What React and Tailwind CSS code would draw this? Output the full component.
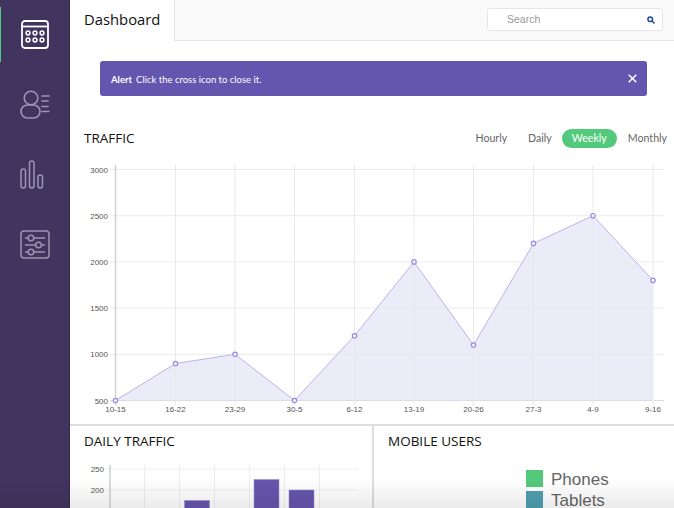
import React from "react";

const xs = [115.5, 175.5, 235, 294.5, 354.5, 414, 473.5, 533.5, 593, 653];
const xl = ["10-15", "16-22", "23-29", "30-5", "6-12", "13-19", "20-26", "27-3", "4-9", "9-16"];
const vals = [500, 900, 1000, 500, 1200, 2000, 1100, 2200, 2500, 1800];
const yOf = (v) => 400.5 - ((v - 500) / 2500) * 231;

function TrafficChart() {
  const pts = vals.map((v, i) => `${xs[i]},${yOf(v)}`).join(" ");
  return (
    <svg width="604" height="264" viewBox="70 160 604 264" className="block">
      <polygon points={`115.5,400.5 ${pts} 653,400.5`} fill="#ecebf8" />
      {[3000, 2500, 2000, 1500, 1000, 500].map((v) => (
        <g key={v}>
          <line x1="110" x2="664" y1={yOf(v)} y2={yOf(v)} stroke={v === 500 ? "#dcdce4" : "#ebebeb"} />
          <text x="108" y={yOf(v) + 3} textAnchor="end" fontSize="8" fill="#555" fontFamily="Liberation Sans">{v}</text>
        </g>
      ))}
      {xs.map((x, i) => (
        <g key={x}>
          <line x1={x} x2={x} y1="165" y2="405" stroke={i === 0 ? "#d0d0d0" : "#e9e9ec"} strokeWidth={i === 0 ? 1.5 : 1} />
          <text x={x} y="412" textAnchor="middle" fontSize="8" fill="#555" fontFamily="Liberation Sans">{xl[i]}</text>
        </g>
      ))}
      <polyline points={pts} fill="none" stroke="#bdb3ec" strokeWidth="1" />
      {vals.map((v, i) => (
        <circle key={i} cx={xs[i]} cy={yOf(v)} r="2.2" fill="#f4f2fc" stroke="#9a8be0" strokeWidth="1.2" />
      ))}
    </svg>
  );
}

function DailyChart() {
  const vx = [110, 144.5, 179.5, 214.5, 249.5, 284.5, 319.5];
  return (
    <svg width="302" height="52" viewBox="70 456 302 52" className="block">
      {[[469, "250"], [490, "200"]].map(([y, t]) => (
        <g key={t}>
          <line x1="106" x2="358" y1={y} y2={y} stroke="#eeeeee" />
          <text x="104" y={y + 3} textAnchor="end" fontSize="8" fill="#555" fontFamily="Liberation Sans">{t}</text>
        </g>
      ))}
      {vx.map((x, i) => (
        <line key={x} x1={x} x2={x} y1="465" y2="508" stroke={i === 0 ? "#d0d0d0" : "#eeeeee"} strokeWidth={i === 0 ? 1.5 : 1} />
      ))}
      <rect x="184.5" y="500.5" width="25" height="10" fill="#6655ad" stroke="#9a8fd0" strokeWidth="0.5" />
      <rect x="254" y="479.5" width="25" height="30" fill="#6655ad" stroke="#9a8fd0" strokeWidth="0.5" />
      <rect x="289" y="490" width="25" height="20" fill="#6655ad" stroke="#9a8fd0" strokeWidth="0.5" />
    </svg>
  );
}

const Icon1 = () => (
  <svg width="28" height="29" viewBox="0 0 28 29" fill="none" stroke="#fff" strokeWidth="1.8">
    <rect x="1" y="1" width="26" height="27" rx="3" />
    <line x1="1" y1="6.5" x2="27" y2="6.5" />
    {[7, 14, 21].map((x) => [13, 20].map((y) => <circle key={x + "-" + y} cx={x} cy={y} r="1.9" strokeWidth="1.5" />))}
  </svg>
);
const Icon2 = () => (
  <svg width="30" height="29" viewBox="0 0 30 29" fill="none" stroke="#9d95b3" strokeWidth="1.6" strokeLinecap="round">
    <circle cx="11" cy="8" r="6.8" />
    <rect x="1" y="15" width="19" height="13" rx="6.5" />
    <path d="M22 6h7M22 11h6M22 16.5h6M22 21.5h7" />
  </svg>
);
const Icon3 = () => (
  <svg width="24" height="29" viewBox="0 0 24 29" fill="none" stroke="#9d95b3" strokeWidth="1.5">
    <rect x="1" y="9" width="4.5" height="19" rx="2.2" />
    <rect x="9.5" y="1" width="4.5" height="27" rx="2.2" />
    <rect x="18" y="15" width="4.5" height="13" rx="2.2" />
  </svg>
);
const Icon4 = () => (
  <svg width="30" height="29" viewBox="0 0 30 29" fill="none" stroke="#9d95b3" strokeWidth="1.5">
    <rect x="1" y="1" width="28" height="27" rx="3" />
    <path d="M5 8h3.5M13.5 8H25M5 15h11M21 15h4M5 22h3.5M13.5 22H25" />
    <circle cx="11" cy="8" r="2.8" />
    <circle cx="18.5" cy="15" r="2.8" />
    <circle cx="11" cy="22" r="2.8" />
  </svg>
);

export default function App() {
  return (
    <div className="relative flex h-[508px] w-[674px] overflow-hidden bg-white font-['Open_Sans',sans-serif]">
      <aside className="relative flex w-[70px] shrink-0 flex-col items-center bg-[#41345f] pt-[20px] border-r border-[#37294f]">
        <div className="absolute left-0 top-[7px] h-[55px] w-[1px] bg-[#53c97c]" />
        <div className="flex h-[29px] items-center"><Icon1 /></div>
        <div className="mt-[41px] flex h-[29px] items-center pl-[1px]"><Icon2 /></div>
        <div className="mt-[41px] mr-[6px] flex h-[29px] items-center"><Icon3 /></div>
        <div className="mt-[41px] flex h-[29px] items-center"><Icon4 /></div>
      </aside>
      <main className="flex min-w-0 flex-1 flex-col">
        <header className="flex h-[41px] shrink-0 items-stretch border-b border-[#e6e6e6] bg-[#fafafa]">
          <div className="-mb-[1px] flex w-[105px] items-center border-r border-[#e6e6e6] bg-white pb-[2px] pl-[14px] text-[14.8px] text-[#111]">Dashboard</div>
          <div className="ml-auto mr-[11px] mt-[8px] flex h-[23px] w-[176px] items-center justify-between rounded-[3px] border border-[#e6e6e6] bg-white pl-[19px] pr-[7px]">
            <span className="font-['Liberation_Sans',sans-serif] text-[10.5px] text-[#999]">Search</span>
            <svg width="8" height="8" viewBox="0 0 8 8" fill="none" stroke="#1d4a8f" strokeWidth="1.5"><circle cx="3.2" cy="3.2" r="2.3" /><path d="M5 5l2.5 2.5" /></svg>
          </div>
        </header>
        <div className="ml-[30px] mr-[27px] mt-[20px] flex h-[35px] shrink-0 items-center justify-between rounded-[3px] bg-[#6455ae] pl-[11px] pr-[10px] font-['Lato',sans-serif] text-[9.5px] text-white">
          <span className="pt-[3px]"><b className="mr-[4px] font-bold">Alert</b>Click the cross icon to close it.</span>
          <svg width="9" height="9" viewBox="0 0 9 9" stroke="#fff" strokeWidth="1.5"><path d="M.7.7l7.6 7.6M8.3.7L.7 8.3" /></svg>
        </div>
        <div className="mt-[31px] flex h-[22px] shrink-0 items-center justify-between pl-[14px] pr-[7px]">
          <h2 className="text-[13.5px] text-[#111]">TRAFFIC</h2>
          <div className="flex items-center font-['Lato',sans-serif] text-[10.6px] text-[#666]">
            <span className="mr-[21px] pt-[1px]">Hourly</span>
            <span className="mr-[10px] pt-[1px]">Daily</span>
            <span className="mr-[11px] flex h-[19px] w-[55px] items-center justify-center rounded-full bg-[#53c97c] pt-[1px] text-white">Weekly</span>
            <span className="pt-[1px]">Monthly</span>
          </div>
        </div>
        <div className="mt-[11px] shrink-0"><TrafficChart /></div>
        <div className="flex min-h-0 flex-1 border-t-2 border-[#dddddd]">
          <section className="w-[304px] shrink-0 border-r-2 border-[#dddddd]">
            <h2 className="pl-[14px] pt-[6px] text-[13.5px] leading-[18px] text-[#111]">DAILY TRAFFIC</h2>
            <div className="mt-[6px]"><DailyChart /></div>
          </section>
          <section className="relative flex-1">
            <h2 className="pl-[14px] pt-[6px] text-[13.5px] leading-[18px] text-[#111]">MOBILE USERS</h2>
            <div className="ml-[152px] mt-[19px] flex flex-col gap-[2px] font-['Liberation_Sans',sans-serif] text-[17px] leading-[17px] text-[#666]">
              <div className="flex items-center gap-[8px]"><span className="h-[17px] w-[17px] bg-[#53c97c]" /><span className="pt-[2px]">Phones</span></div>
              <div className="flex items-center gap-[8px]"><span className="h-[17px] w-[17px] bg-[#4f9fb0]" /><span className="pt-[2px]">Tablets</span></div>
            </div>
          </section>
        </div>
      </main>
      <div className="pointer-events-none absolute inset-x-0 bottom-0 h-[30px] bg-gradient-to-b from-transparent to-[#00000014]" />
    </div>
  );
}
